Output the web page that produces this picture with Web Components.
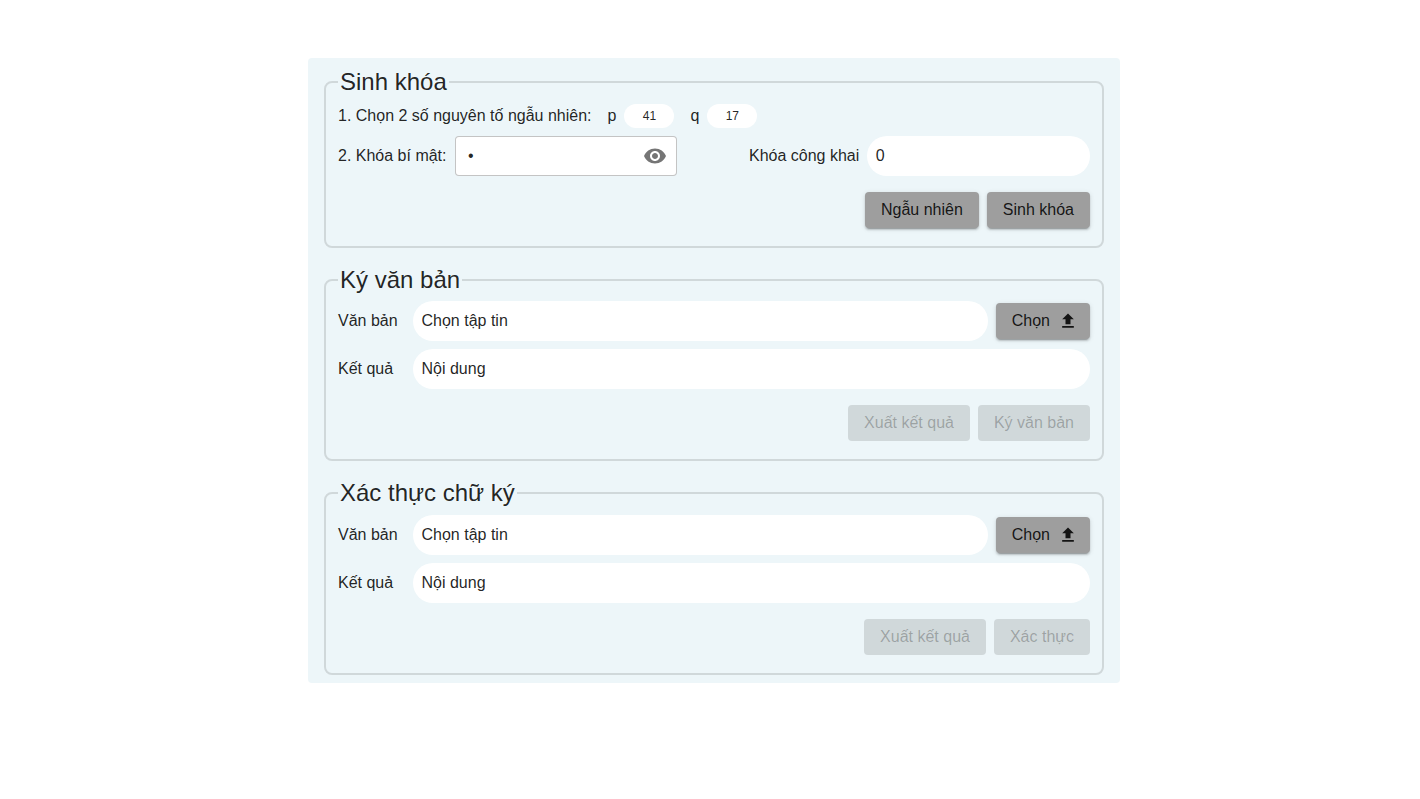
<!DOCTYPE html>
<html lang="vi"><head><meta charset="utf-8"><title>RSA</title>
<style>
html,body{margin:0;background:#fff}
body{padding-left:8px;font:16px/normal "Liberation Sans",Arial,sans-serif;color:rgba(0,0,0,.87)}
</style></head><body>
<template id="t-btn"><style>
:host{display:inline-flex;box-sizing:border-box;height:36px;align-items:center;justify-content:center;padding:0 16px;border-radius:4px;background:#9e9e9e;color:rgba(0,0,0,.87);font-size:16px;box-shadow:0 3px 1px -2px rgba(0,0,0,.2),0 2px 2px 0 rgba(0,0,0,.14),0 1px 5px 0 rgba(0,0,0,.12)}
:host([disabled]){background:rgba(0,0,0,.12);color:rgba(0,0,0,.26);box-shadow:none}
svg{display:none;width:20px;height:20px;margin:0 -4px 0 8px;fill:currentColor}
:host([upload]) svg{display:block}
</style><slot></slot><svg viewBox="0 0 24 24"><path d="M9 16h6v-6h4l-7-7-7 7h4zm-4 2h14v2H5z"/></svg></template>

<template id="t-pill"><style>
:host{display:flex;box-sizing:border-box;height:40px;align-items:center;padding-left:8.5px;background:#fff;border-radius:20px;font-size:16px;flex:1 1 0;min-width:0}
:host([small]){flex:0 0 50px;height:24px;padding:0;justify-content:center;font-size:12px;border-radius:12px}
</style><slot></slot></template>

<template id="t-secret"><style>
:host{display:flex;box-sizing:border-box;width:222px;height:40px;align-items:center;justify-content:space-between;padding:0 9px 0 12.5px;background:#fff;border:1px solid rgba(0,0,0,.23);border-radius:4px}
svg{width:24px;height:24px;fill:rgba(0,0,0,.54);display:block}
</style><slot></slot><svg viewBox="0 0 24 24"><path d="M12 4.5C7 4.5 2.73 7.61 1 12c1.73 4.39 6 7.5 11 7.5s9.27-3.11 11-7.5c-1.73-4.39-6-7.5-11-7.5zM12 17c-2.76 0-5-2.24-5-5s2.24-5 5-5 5 2.24 5 5-2.24 5-5 5zm0-8c-1.66 0-3 1.34-3 3s1.34 3 3 3 3-1.34 3-3-1.34-3-3-3z"/></svg></template>

<template id="t-group"><style>
:host{display:block}
fieldset{margin:0;padding:8px 12px 18px;border:2px solid rgba(0,0,0,.12);border-radius:8px;display:flex;flex-direction:column;gap:8px;min-width:0}
legend{font-size:24px;line-height:27.5px;color:rgba(0,0,0,.87)}
</style><fieldset><legend></legend><slot></slot></fieldset></template>

<template id="t-row"><style>
:host{display:flex;align-items:center;gap:8px}
:host([actions]){justify-content:flex-end;margin-top:8px}
</style><slot></slot></template>

<template id="t-file"><style>
:host{display:flex;flex-direction:column;gap:8px}
.l{flex:0 0 67px}
</style>
<sk-row><span class="l">Văn bản</span><sk-pill>Chọn tập tin</sk-pill><sk-btn upload>Chọn</sk-btn></sk-row>
<sk-row><span class="l">Kết quả</span><sk-pill>Nội dung</sk-pill></sk-row>
<sk-row actions><slot></slot></sk-row></template>

<template id="t-keys"><style>
:host{display:flex;flex-direction:column;gap:8px}
.g{display:flex;align-items:center;gap:8px}
.r1{gap:16px}
.pub{flex:0 0 341px}
sk-row.two{justify-content:space-between}
</style>
<sk-row class="r1"><span>1. Chọn 2 số nguyên tố ngẫu nhiên:</span><span class="g">p <sk-pill small>41</sk-pill></span><span class="g">q <sk-pill small>17</sk-pill></span></sk-row>
<sk-row class="two"><span class="g">2. Khóa bí mật: <sk-secret>•</sk-secret></span><span class="g pub">Khóa công khai <sk-pill>0</sk-pill></span></sk-row>
<sk-row actions><sk-btn>Ngẫu nhiên</sk-btn><sk-btn>Sinh khóa</sk-btn></sk-row></template>

<template id="t-panel"><style>
:host{display:flex;flex-direction:column;gap:17.9px;box-sizing:border-box;width:812px;margin:58px auto 0;padding:10.4px 16px 8.4px;background:#edf6f9;border-radius:4px}
</style><slot></slot></template>

<sk-panel>
<sk-group label="Sinh khóa"><sk-keys></sk-keys></sk-group>
<sk-group label="Ký văn bản"><sk-file><sk-btn disabled>Xuất kết quả</sk-btn><sk-btn disabled>Ký văn bản</sk-btn></sk-file></sk-group>
<sk-group label="Xác thực chữ ký"><sk-file><sk-btn disabled>Xuất kết quả</sk-btn><sk-btn disabled>Xác thực</sk-btn></sk-file></sk-group>
</sk-panel>
<script>
const reg=(tag,id,init)=>customElements.define(tag,class extends HTMLElement{
  constructor(){super();this.attachShadow({mode:'open'}).append(document.getElementById(id).content.cloneNode(true));}
  connectedCallback(){init&&init(this);}
});
reg('sk-btn','t-btn');reg('sk-pill','t-pill');reg('sk-secret','t-secret');reg('sk-row','t-row');
reg('sk-file','t-file');reg('sk-keys','t-keys');reg('sk-panel','t-panel');
reg('sk-group','t-group',el=>{el.shadowRoot.querySelector('legend').textContent=el.getAttribute('label');});
</script>
</body></html>
